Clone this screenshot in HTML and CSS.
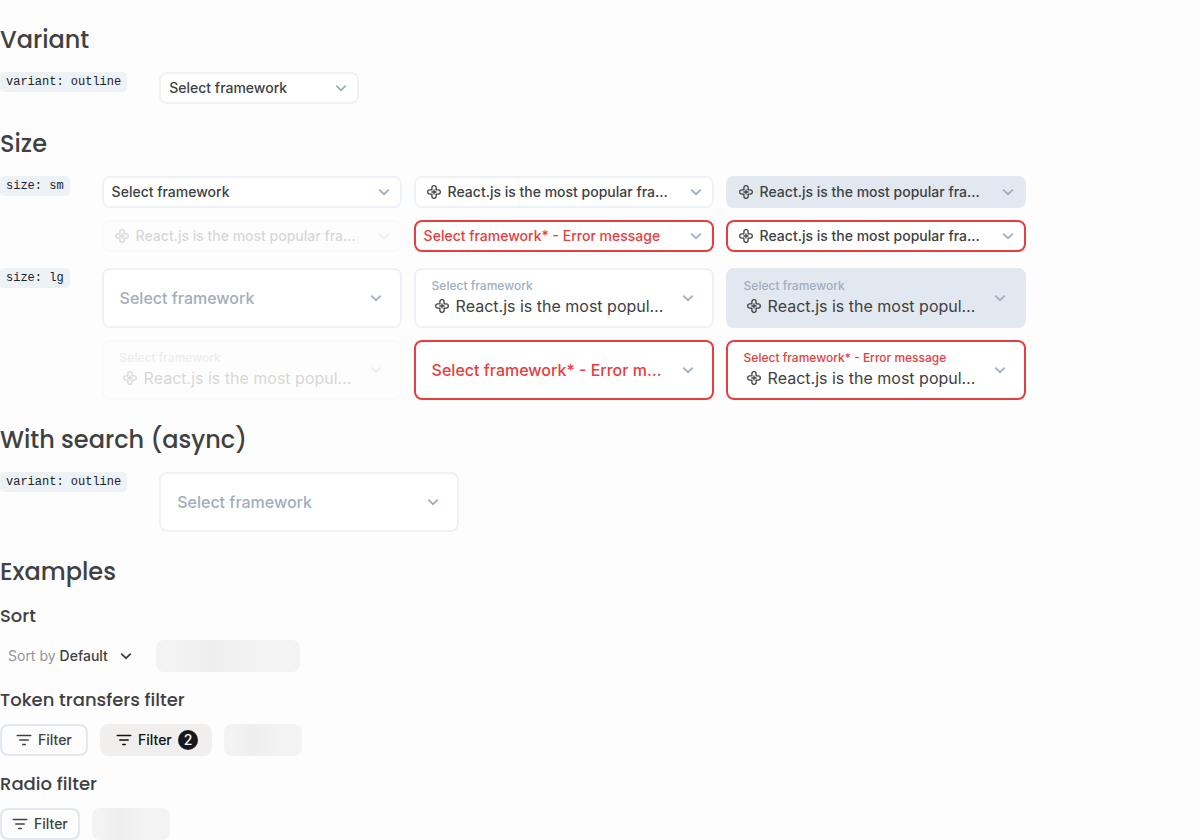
FILE: index.html
```html
<!DOCTYPE html>
<html lang="en">
<head>
<meta charset="utf-8">
<meta name="viewport" content="width=device-width, initial-scale=1">
<title>Select</title>
<link rel="stylesheet" href="styles.css">
</head>
<body>
<svg class="sprite" aria-hidden="true">
  <symbol id="chevron" viewBox="0 0 20 20"><path d="M5.200 7.600l4.800 4.600 4.800-4.600" fill="none" stroke="currentColor" stroke-width="1.800"/></symbol>
  <symbol id="petals" viewBox="0 0 20 20"><g fill="none" stroke="currentColor" stroke-width="1.300" stroke-linejoin="round"><path d="M7.900 7.900V5.800a2.100 2.100 0 0 1 4.200 0v2.100h2.100a2.100 2.100 0 0 1 0 4.200h-2.100v2.100a2.100 2.100 0 0 1-4.200 0v-2.100H5.800a2.100 2.100 0 0 1 0-4.200z"/><path d="M10 7.400v5.200M7.400 10h5.200" stroke-width="1.300"/></g></symbol>
  <symbol id="filter" viewBox="0 0 20 20"><path d="M3.300 5.500h13.400M5.800 10h8.400M8.800 14.500h2.400" fill="none" stroke="currentColor" stroke-width="1.600" stroke-linecap="round"/></symbol>
</svg>
<main class="page">
  <section class="section">
    <h2 class="title">Variant</h2>
    <div class="samples">
      <div><code class="code">variant: outline</code></div>
      <div class="cells">
        <div class="select select-narrow"><select class="control" aria-label="Framework"><option>Select framework</option></select><svg class="icon chevron"><use href="#chevron"/></svg></div>
      </div>
    </div>
  </section>

  <section class="section">
    <h2 class="title">Size</h2>
    <div class="samples">
      <div><code class="code">size: sm</code></div>
      <div class="cells">
        <div class="select"><select class="control" aria-label="Framework"><option>Select framework</option></select><svg class="icon chevron"><use href="#chevron"/></svg></div>
        <div class="select"><svg class="icon"><use href="#petals"/></svg><select class="control" aria-label="Framework"><option>React.js is the most popular framework</option></select><svg class="icon chevron"><use href="#chevron"/></svg></div>
        <div class="select readonly"><svg class="icon"><use href="#petals"/></svg><select class="control" aria-label="Framework, read only"><option>React.js is the most popular framework</option></select><svg class="icon chevron"><use href="#chevron"/></svg></div>
        <div class="select disabled"><svg class="icon"><use href="#petals"/></svg><select class="control" aria-label="Framework" disabled><option>React.js is the most popular framework</option></select><svg class="icon chevron"><use href="#chevron"/></svg></div>
        <div class="select invalid empty"><select class="control" aria-label="Framework" aria-invalid="true"><option>Select framework* - Error message</option></select><svg class="icon chevron"><use href="#chevron"/></svg></div>
        <div class="select invalid"><svg class="icon"><use href="#petals"/></svg><select class="control" aria-label="Framework" aria-invalid="true"><option>React.js is the most popular framework</option></select><svg class="icon chevron"><use href="#chevron"/></svg></div>
      </div>
      <div><code class="code">size: lg</code></div>
      <div class="cells">
        <div class="select large empty"><select class="control" aria-label="Framework"><option>Select framework</option></select><svg class="icon chevron"><use href="#chevron"/></svg></div>
        <div class="select large"><div class="field"><label class="label" for="lg-filled">Select framework</label><div class="value"><svg class="icon"><use href="#petals"/></svg><select class="control" id="lg-filled"><option>React.js is the most popular framework</option></select></div></div><svg class="icon chevron"><use href="#chevron"/></svg></div>
        <div class="select large readonly"><div class="field"><label class="label" for="lg-readonly">Select framework</label><div class="value"><svg class="icon"><use href="#petals"/></svg><select class="control" id="lg-readonly"><option>React.js is the most popular framework</option></select></div></div><svg class="icon chevron"><use href="#chevron"/></svg></div>
        <div class="select large disabled"><div class="field"><label class="label" for="lg-disabled">Select framework</label><div class="value"><svg class="icon"><use href="#petals"/></svg><select class="control" id="lg-disabled" disabled><option>React.js is the most popular framework</option></select></div></div><svg class="icon chevron"><use href="#chevron"/></svg></div>
        <div class="select large invalid empty"><select class="control" aria-label="Framework" aria-invalid="true"><option>Select framework* - Error message</option></select><svg class="icon chevron"><use href="#chevron"/></svg></div>
        <div class="select large invalid"><div class="field"><label class="label" for="lg-invalid">Select framework* - Error message</label><div class="value"><svg class="icon"><use href="#petals"/></svg><select class="control" id="lg-invalid" aria-invalid="true"><option>React.js is the most popular framework</option></select></div></div><svg class="icon chevron"><use href="#chevron"/></svg></div>
      </div>
    </div>
  </section>

  <section class="section">
    <h2 class="title">With search (async)</h2>
    <div class="samples">
      <div><code class="code">variant: outline</code></div>
      <div class="cells">
        <div class="select large empty"><select class="control" aria-label="Framework"><option>Select framework</option></select><svg class="icon chevron"><use href="#chevron"/></svg></div>
      </div>
    </div>
  </section>

  <section class="section">
    <h2 class="title">Examples</h2>
    <div class="examples">
      <div class="example">
        <h3 class="subtitle">Sort</h3>
        <div class="row">
          <div class="sort"><label class="sort-label" for="sort">Sort by</label><select class="control sort-control" id="sort"><option>Default</option></select><svg class="icon"><use href="#chevron"/></svg></div>
          <div class="skeleton skeleton-wide"></div>
        </div>
      </div>
      <div class="example">
        <h3 class="subtitle">Token transfers filter</h3>
        <div class="row">
          <button class="filter" type="button"><svg class="icon"><use href="#filter"/></svg>Filter</button>
          <button class="filter active" type="button"><svg class="icon"><use href="#filter"/></svg>Filter<span class="badge">2</span></button>
          <div class="skeleton"></div>
        </div>
      </div>
      <div class="example">
        <h3 class="subtitle">Radio filter</h3>
        <div class="row">
          <button class="filter compact" type="button"><svg class="icon"><use href="#filter"/></svg>Filter</button>
          <div class="skeleton"></div>
        </div>
      </div>
    </div>
  </section>
</main>
</body>
</html>
```
FILE: styles.css
```css
* {
  box-sizing: border-box;
}

body {
  margin: 0;
  background: #fdfdfd;
  color: #404142;
  font-family: Inter, "Liberation Sans", sans-serif;
  font-size: 14px;
  line-height: 20px;
}

.sprite {
  display: none;
}

.page {
  display: flex;
  flex-direction: column;
  gap: 24px;
  padding-top: 24px;
}

.title,
.subtitle {
  margin: 0;
  font-family: Poppins, "Noto Sans", sans-serif;
  font-weight: 500;
}

.title {
  margin-bottom: 16px;
  font-size: 24px;
  line-height: 32px;
}

.subtitle {
  margin-bottom: 12px;
  font-size: 18px;
  line-height: 24px;
}

.samples {
  display: grid;
  grid-template-columns: max-content minmax(0, 1fr);
  gap: 16px 32px;
}

.code {
  display: block;
  padding: 0 6px;
  border-radius: 4px;
  background: #edf2f7;
  color: #1a202c;
  font-family: "Liberation Mono", monospace;
  font-size: 12px;
  line-height: 20px;
}

.cells {
  display: grid;
  grid-template-columns: repeat(3, minmax(0, 300px));
  gap: 12px;
}

.select {
  display: flex;
  align-items: center;
  gap: 4px;
  min-width: 0;
  min-height: 32px;
  padding: 0 6px 0 8px;
  border: 2px solid #edf2f7;
  border-radius: 8px;
  background: #fff;
}

.select-narrow {
  max-width: 200px;
}

.large {
  min-height: 60px;
  padding: 0 14px 0 16px;
}

.readonly {
  border-color: #e2e8f0;
  background: #e2e8f0;
}

.disabled {
  opacity: 0.2;
}

.invalid {
  border-color: #e53e3e;
}

.icon {
  flex: none;
  width: 20px;
  height: 20px;
}

.chevron {
  margin-left: 4px;
  color: #a0aec0;
}

.control {
  flex: 1;
  min-width: 0;
  margin: 0;
  padding: 0;
  border: 0;
  appearance: none;
  background: none;
  color: inherit;
  font: inherit;
  font-weight: 500;
  opacity: 1;
  text-overflow: ellipsis;
}

.large .control {
  font-size: 16px;
  line-height: 24px;
}

.value .control {
  font-weight: 400;
}

.field {
  flex: 1;
  min-width: 0;
}

.label {
  display: block;
  color: #a0aec0;
  font-size: 12px;
  font-weight: 500;
  line-height: 16px;
}

.value {
  display: flex;
  align-items: center;
  gap: 4px;
}

.large.empty .control {
  color: #a0aec0;
}

.invalid .label,
.select.invalid.empty .control {
  color: #e53e3e;
}

.examples {
  display: flex;
  flex-direction: column;
  gap: 16px;
}

.row {
  display: flex;
  gap: 12px;
}

.sort {
  display: flex;
  align-items: center;
  gap: 4px;
  min-width: 144px;
  height: 32px;
  padding: 0 8px;
}

.sort-label {
  color: #949596;
}

.filter {
  display: flex;
  align-items: center;
  gap: 4px;
  min-width: 88px;
  height: 32px;
  padding: 0 12px;
  border: 2px solid #e2e8f0;
  border-radius: 8px;
  background: none;
  color: #404142;
  font: inherit;
  font-weight: 500;
}

.active {
  min-width: 112px;
  border-color: #f1efed;
  background: #f1efed;
  color: #101112;
}

.compact {
  min-width: 80px;
  padding: 0 8px;
}

.badge {
  width: 20px;
  height: 20px;
  margin-left: auto;
  border-radius: 50%;
  background: #18191a;
  color: #fff;
  text-align: center;
}

.skeleton {
  width: 78px;
  height: 32px;
  border-radius: 8px;
  background: linear-gradient(90deg, #f3f3f3 10%, #eee 38%, #f3f3f3 70%);
}

.skeleton-wide {
  width: 144px;
}
```
